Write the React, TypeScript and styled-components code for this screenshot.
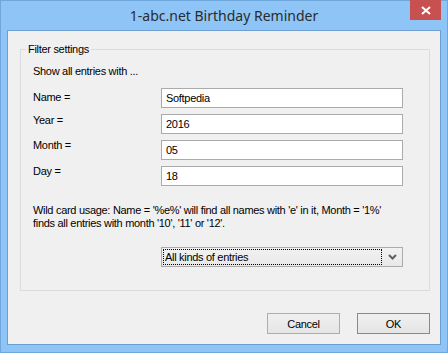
import React from 'react';
import styled, { createGlobalStyle } from 'styled-components';

const GlobalStyle = createGlobalStyle`
  html, body {
    margin: 0;
    padding: 0;
    background: #8ec5f6;
  }
  * {
    box-sizing: border-box;
  }
`;

const UI_FONT = `"Liberation Sans", Arial, sans-serif`;

const ROWS = [
  { label: 'Name =', value: 'Softpedia', nudge: 3 },
  { label: 'Year =', value: '2016', nudge: 0 },
  { label: 'Month =', value: '05', nudge: -1 },
  { label: 'Day =', value: '18', nudge: -1 },
];

const ChevronIcon = () => (
  <svg width="9" height="6" viewBox="0 0 9 6">
    <path d="M1 1 L4.5 4.5 L8 1" fill="none" stroke="#606060" strokeWidth="2" />
  </svg>
);

const CloseIcon = () => (
  <svg width="10" height="9" viewBox="0 0 10 9">
    <path d="M1 1 L9 8 M9 1 L1 8" stroke="#fff" strokeWidth="2" />
  </svg>
);

export default function App() {
  return (
    <>
      <GlobalStyle />
      <Window>
        <TitleBar>
          <span />
          <Title>1-abc.net Birthday Reminder</Title>
          <CloseButton>
            <CloseIcon />
          </CloseButton>
        </TitleBar>
        <Client>
          <Group>
            <Legend>Filter settings</Legend>
            <GroupBody>
              <Text>Show all entries with ...</Text>
              <Fields>
                {ROWS.map((row) => (
                  <React.Fragment key={row.label}>
                    <Label $nudge={row.nudge}>{row.label}</Label>
                    <Input readOnly defaultValue={row.value} />
                  </React.Fragment>
                ))}
              </Fields>
              <Hint>
                Wild card usage: Name = '%e%' will find all names with 'e' in it, Month = '1%'
                <br />
                finds all entries with month '10', '11' or '12'.
              </Hint>
              <ComboRow>
                <Combo>
                  <ComboText>All kinds of entries</ComboText>
                  <ComboArrow>
                    <ChevronIcon />
                  </ComboArrow>
                </Combo>
              </ComboRow>
            </GroupBody>
          </Group>
          <ButtonBar>
            <Button>Cancel</Button>
            <Button $primary>OK</Button>
          </ButtonBar>
        </Client>
      </Window>
    </>
  );
}

// Frame
const Window = styled.div`
  width: 448px;
  height: 353px;
  border: 1px solid #6fa6db;
  background: #8ec5f6;
  padding: 0 6px 7px 6px;
  display: flex;
  flex-direction: column;
`;

const TitleBar = styled.div`
  height: 29px;
  display: grid;
  grid-template-columns: 1fr auto 1fr;
  align-items: start;
`;

const Title = styled.div`
  font-family: "Noto Sans", "Open Sans", sans-serif;
  font-size: 14px;
  color: #2b2b2b;
  line-height: 29px;
`;

const CloseButton = styled.div`
  justify-self: end;
  width: 31px;
  height: 20px;
  margin-top: -1px;
  background: #c75050;
  display: flex;
  align-items: center;
  justify-content: center;
`;

const Client = styled.div`
  flex: 1;
  border: 1px solid #6f9fd0;
  background: #f0f0f0;
  display: flex;
  flex-direction: column;
  font-family: ${UI_FONT};
  font-size: 11px;
  letter-spacing: -0.3px;
  color: #000;
`;

// Group box
const Group = styled.fieldset`
  margin: 12px 10px 0 12px;
  padding: 0 0 23px 0;
  border: 1px solid #dcdcdc;
  min-width: 0;
`;

const Legend = styled.legend`
  margin-left: 5px;
  padding: 0 2px;
  line-height: 13px;
  font-size: 11px;
`;

const GroupBody = styled.div`
  padding: 9px 0 0 12px;
  display: flex;
  flex-direction: column;
`;

const Text = styled.div`
  line-height: 13px;
`;

const Fields = styled.div`
  margin-top: 10px;
  display: grid;
  grid-template-columns: 128px 242px;
  grid-auto-rows: 20px;
  row-gap: 6px;
`;

const Label = styled.div<{ $nudge: number }>`
  line-height: 13px;
  align-self: start;
  margin-top: ${(p) => p.$nudge}px;
`;

const Input = styled.input`
  height: 20px;
  width: 242px;
  border: 1px solid #ababab;
  background: #fff;
  padding: 0 0 0 4px;
  font-family: ${UI_FONT};
  font-size: 11px;
  letter-spacing: -0.3px;
  color: #000;
  outline: none;
`;

const Hint = styled.div`
  margin-top: 18px;
  line-height: 13px;
`;

const ComboRow = styled.div`
  margin-top: 17px;
  padding-left: 128px;
`;

const Combo = styled.div`
  width: 242px;
  height: 20px;
  border: 1px solid #acacac;
  background: linear-gradient(#f2f2f2, #e8e8e8);
  padding: 1px;
  display: flex;
  align-items: stretch;
`;

const ComboText = styled.div`
  flex: 1;
  border: 1px dotted #000;
  line-height: 14px;
  padding-left: 1px;
`;

const ComboArrow = styled.div`
  width: 19px;
  display: flex;
  align-items: center;
  justify-content: center;
  padding-left: 2px;
`;

// Buttons
const ButtonBar = styled.div`
  margin-top: auto;
  padding: 0 10px 10px 0;
  display: flex;
  justify-content: flex-end;
  gap: 17px;
`;

const Button = styled.div<{ $primary?: boolean }>`
  width: 73px;
  height: 21px;
  border: 1px solid ${(p) => (p.$primary ? '#3c9cf0' : '#adadad')};
  background: linear-gradient(#f0f0f0, #e5e5e5);
  display: flex;
  align-items: center;
  justify-content: center;
  font-size: 11px;
`;
